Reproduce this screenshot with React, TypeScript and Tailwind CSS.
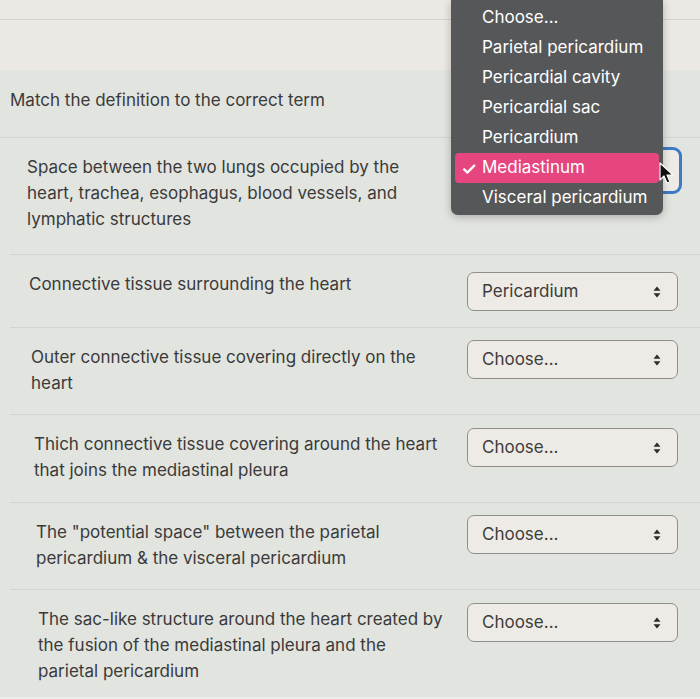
import React from 'react';

const rows = [
  {
    text: 'Space between the two lungs occupied by the heart, trachea, esophagus, blood vessels, and lymphatic structures',
    value: '',
    pad: 'pl-[17px]',
    h: 'h-[117px]',
    sel: '-mt-[7px]',
    focused: true,
  },
  { text: 'Connective tissue surrounding the heart', value: 'Pericardium', pad: 'pl-[19px]', h: 'h-[73px]', sel: 'mt-[1px]' },
  { text: 'Outer connective tissue covering directly on the heart', value: 'Choose...', pad: 'pl-[21px]', h: 'h-[87px]', sel: '-mt-[4px]' },
  { text: 'Thich connective tissue covering around the heart that joins the mediastinal pleura', value: 'Choose...', pad: 'pl-[24px]', h: 'h-[88px]', sel: '-mt-[3px]' },
  { text: 'The "potential space" between the parietal pericardium & the visceral pericardium', value: 'Choose...', pad: 'pl-[26px]', h: 'h-[87px]', sel: '-mt-[4px]' },
  { text: 'The sac-like structure around the heart created by the fusion of the mediastinal pleura and the parietal pericardium', value: 'Choose...', pad: 'pl-[28px]', h: 'h-[107px]', sel: '-mt-[3px]' },
];

const options = [
  'Choose...',
  'Parietal pericardium',
  'Pericardial cavity',
  'Pericardial sac',
  'Pericardium',
  'Mediastinum',
  'Visceral pericardium',
];

function Arrows() {
  return (
    <svg width="8" height="12" viewBox="0 0 8 12" className="shrink-0">
      <path d="M4 0.5 L7.5 4.8 L0.5 4.8 Z" fill="#2b2b2b" />
      <path d="M4 11.5 L7.5 7.2 L0.5 7.2 Z" fill="#2b2b2b" />
    </svg>
  );
}

function Select({ value, focused, className }: { value: string; focused?: boolean; className: string }) {
  if (focused) {
    return (
      <div className={`ml-auto mr-[18px] h-[47px] w-[215px] shrink-0 rounded-[9px] border-[3px] border-[#3d79c6] bg-[#eeebe6] ${className}`} />
    );
  }
  return (
    <div
      className={`ml-auto mr-[22px] flex h-[39px] w-[211px] shrink-0 items-center justify-between rounded-[7px] border border-[#8e8e8c] bg-[#eeebe6] pl-[14px] pr-[16px] text-[17px] text-[#3c3c3c] ${className}`}
    >
      <span>{value}</span>
      <Arrows />
    </div>
  );
}

export default function App() {
  return (
    <div className="relative h-[699px] w-[700px] overflow-hidden bg-[#e2e4e0] font-['Inter','Liberation_Sans',sans-serif] text-[#3a3a3a]">
      <div className="h-[70px] bg-[#ece9e4]">
        <div className="h-[20px] border-b border-[#d6d4cf]" />
      </div>

      <div className="flex h-[68px] items-center border-b border-[#d2d4d1] pb-[5px] pl-[10px] text-[17px]">
        Match the definition to the correct term
      </div>

      {rows.map((r, i) => (
        <div
          key={i}
          className={`ml-[10px] flex items-start border-b border-[#d2d4d1] pt-[16px] ${r.h} ${i === rows.length - 1 ? 'border-b-0' : ''}`}
        >
          <p className={`w-[440px] shrink-0 pr-[5px] text-[17px] leading-[26px] ${r.pad}`}>{r.text}</p>
          <Select value={r.value} focused={r.focused} className={r.sel} />
        </div>
      ))}
      <div className="h-[2px] bg-[#eceeeb]" />

      {/* open native select menu */}
      <div className="absolute left-[451px] top-0 h-[215px] w-[212px] rounded-b-[7px] bg-[#565758] px-[4px] pt-[3px] shadow-[0_2px_8px_rgba(0,0,0,0.25)]">
        {options.map((o) => {
          const active = o === 'Mediastinum';
          return (
            <div
              key={o}
              className={`flex h-[30px] items-center rounded-[4px] text-[17px] text-white ${active ? 'bg-[#e6467f]' : ''}`}
            >
              <span className="w-[27px] pl-[6px] text-[18px] font-semibold">{active ? '✓' : ''}</span>
              <span>{o}</span>
            </div>
          );
        })}
      </div>

      {/* mouse cursor */}
      <svg className="absolute left-[659px] top-[162px]" width="16" height="24" viewBox="0 0 16 24">
        <path d="M1 1 L1 18 L5 14 L8 21 L11 20 L8 13 L14 13 Z" fill="#111" stroke="#fff" strokeWidth="1.2" strokeLinejoin="round" />
      </svg>
    </div>
  );
}
